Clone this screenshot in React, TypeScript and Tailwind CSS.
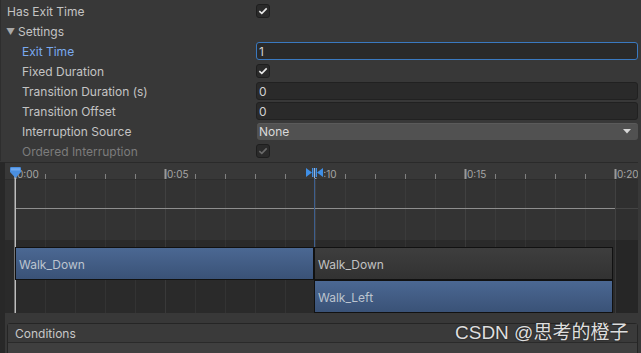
import React from 'react';

const ticks = Array.from({ length: 21 }, (_, i) => 10 + i * 30);
const majors = [
    { x: 10, label: '0:00' },
    { x: 160, label: '0:05' },
    { x: 310, label: '0:10' },
    { x: 460, label: '0:15' },
    { x: 610, label: '0:20' },
];

const Check = ({ dim }: { dim?: boolean }) => (
    <div className="w-[14px] h-[14px] rounded-[3px] bg-[#2a2a2a] border border-[#1e1e1e] flex items-center justify-center">
        <svg width="10" height="8" viewBox="0 0 10 8">
            <path d="M1.3 4.2 L3.8 6.4 L8.7 1.4" fill="none" stroke={dim ? '#6a6a6a' : '#e8e8e8'} strokeWidth="1.6" />
        </svg>
    </div>
);

const Field = ({ value, focused }: { value: string; focused?: boolean }) => (
    <div
        className={`h-[18px] rounded-[3px] bg-[#2a2a2a] border px-[2px] pt-px flex items-center text-[12px] text-[#d2d2d2] ${
            focused ? 'border-[#3a79c0]' : 'border-[#212121]'
        }`}
    >
        {value}
    </div>
);

const Row = ({
    label,
    indent,
    labelClass = 'text-[#c4c4c4]',
    children,
}: {
    label: string;
    indent?: boolean;
    labelClass?: string;
    children?: React.ReactNode;
}) => (
    <div className="flex h-5 items-center">
        <div className={`w-[255px] shrink-0 pt-[2px] ${indent ? 'pl-[21px]' : 'pl-[6px]'} ${labelClass}`}>{label}</div>
        <div className="flex-1 pr-[3px]">{children}</div>
    </div>
);

const Clip = ({ label, blue, left, top }: { label: string; blue?: boolean; left: number; top: number }) => (
    <div
        className={`absolute w-[299px] h-[33px] border border-[#111] flex items-center pl-[3px] pt-[2px] text-[12px] ${
            blue
                ? 'bg-gradient-to-b from-[#4b6893] to-[#3a5277] text-[#bcc4cf]'
                : 'bg-gradient-to-b from-[#3e3e3e] to-[#323232] text-[#c2c2c2]'
        }`}
        style={{ left, top }}
    >
        {label}
    </div>
);

const Timeline = () => (
    <div className="relative w-[633px] h-[151px] bg-[#333]">
        <svg className="absolute inset-0" width="633" height="151">
            <rect x="0" y="0" width="633" height="17" fill="#383838" />
            <rect x="0" y="0" width="633" height="1" fill="#2a2a2a" />
            <rect x="0" y="17" width="633" height="1" fill="#2d2d2d" />
            <rect x="0" y="78" width="633" height="73" fill="#2a2a2a" />
            <rect x="611" y="18" width="22" height="133" fill="rgba(0,0,0,0.08)" />
            {ticks.map((x) => (
                <rect key={'g' + x} x={x} y="18" width="1" height="133" fill={x % 150 === 10 ? 'rgba(255,255,255,0.07)' : 'rgba(255,255,255,0.045)'} />
            ))}
            {ticks.map((x) =>
                x % 150 === 10 ? (
                    <rect key={'t' + x} x={x - 0.5} y="7" width="2" height="10" fill="#9a9a9a" />
                ) : (
                    <rect key={'t' + x} x={x} y="12" width="1" height="5" fill="#808080" />
                )
            )}
            {majors.map((m) => (
                <text key={m.label} x={m.x + 2} y="15.5" fontSize="10" fill="#a6a6a6" fontFamily="Inter, sans-serif">
                    {m.label}
                </text>
            ))}
            <rect x="10" y="46" width="600" height="1" fill="#8e8e8e" />
            <rect x="610" y="46" width="23" height="1" fill="#444" />
            <rect x="9.5" y="14" width="1.5" height="137" fill="#bdbdbd" />
            <rect x="309" y="14" width="1" height="137" fill="#3d5f8f" />
            <path d="M5 6.2 Q5 5 6.2 5 H14.8 Q16 5 16 6.2 V10 L10.5 16 L5 10 Z" fill="#4a8fe0" />
            <path d="M6 6.2 H15 V8.5 H6 Z" fill="#6fa9f0" />
            <rect x="300" y="5" width="19" height="11" fill="#383838" />
            <polygon points="301,6 307,10.5 301,15" fill="#3f8fe6" />
            <rect x="307" y="6" width="1.4" height="9" fill="#3f8fe6" />
            <rect x="309" y="6" width="1" height="10" fill="#9ab4d8" />
            <rect x="310.6" y="6" width="1.4" height="9" fill="#3f8fe6" />
            <polygon points="318,6 312,10.5 318,15" fill="#3f8fe6" />
        </svg>
        <Clip label="Walk_Down" blue left={10} top={85} />
        <Clip label="Walk_Down" left={309} top={85} />
        <Clip label="Walk_Left" blue left={309} top={118} />
    </div>
);

export default function App() {
    return (
        <div className="relative w-[641px] h-[353px] overflow-hidden bg-[#383838] text-[12px] font-['Inter','Noto_Sans',sans-serif]">
            <div className="border-l border-[#2e2e2e] pt-px">
                <Row label="Has Exit Time">
                    <Check />
                </Row>
                <div className="flex h-5 items-center pt-[2px] pl-[5px] text-[#c4c4c4]">
                    <span className="text-[#a8a8a8] text-[9px] mr-[3px]">▼</span>
                    Settings
                </div>
                <Row label="Exit Time" indent labelClass="text-[#7aaaf0]">
                    <Field value="1" focused />
                </Row>
                <Row label="Fixed Duration" indent>
                    <Check />
                </Row>
                <Row label="Transition Duration (s)" indent>
                    <Field value="0" />
                </Row>
                <Row label="Transition Offset" indent>
                    <Field value="0" />
                </Row>
                <Row label="Interruption Source" indent>
                    <div className="h-[17px] ml-px rounded-[3px] bg-[#515151] border-t border-[#5a5a5a] flex items-center justify-between pl-[2px] pr-[7px] text-[#dadada]">
                        <span className="pt-px">None</span>
                        <svg width="8" height="5" viewBox="0 0 8 5">
                            <polygon points="0,0 8,0 4,4.5" fill="#d8d8d8" />
                        </svg>
                    </div>
                </Row>
                <Row label="Ordered Interruption" indent labelClass="text-[#7c7c7c]">
                    <Check dim />
                </Row>
            </div>
            <div className="flex mt-px">
                <div className="w-[5px] h-[191px] shrink-0 bg-[#282828]" />
                <div className="flex flex-col">
                    <Timeline />
                    <div className="mt-[10px] ml-[2px] w-[631px] h-[40px] rounded-t-[3px] border border-[#252525] bg-[#3f3f3f]">
                        <div className="h-[19px] bg-[#3a3a3a] border-b border-[#2a2a2a] flex items-center pt-[2px] pl-[7px] text-[#c8c8c8]">
                            Conditions
                        </div>
                    </div>
                </div>
            </div>
            <div className="absolute left-[455px] top-[319px] text-[19px] text-[#dedede] font-['Liberation_Sans','Noto_Sans_CJK_SC',sans-serif] [text-shadow:0_0_2px_rgba(0,0,0,0.6)]">
                CSDN @思考的橙子
            </div>
        </div>
    );
}
